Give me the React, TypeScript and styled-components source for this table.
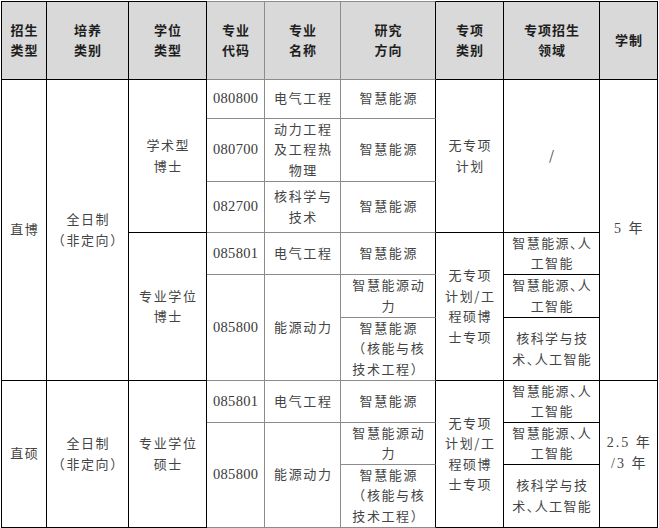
import React from 'react';
import styled, { createGlobalStyle } from 'styled-components';

const Global = createGlobalStyle`
  html, body { margin: 0; padding: 0; background: #fff; }
  body { font-family: "Noto Sans CJK SC", "Noto Sans", sans-serif; }
`;

const K = '#000';
const G = '#8c8c8c';

const Page = styled.div`
  padding: 1px 0 0 1px;
`;

const Table = styled.div`
  display: grid;
  width: max-content;
  grid-template-columns: 45px 82px 78px 58px 76px 95px 68px 96px 58px;
  grid-template-rows: 79px 39px 63px 51px 42px 43px 63px 42px 42px 63px;
  border-left: 1px solid ${K};
`;

type CellProps = {
  $c: number;
  $r: number;
  $span?: number;
  $rc?: string;
  $bc?: string;
};

const Cell = styled.div<CellProps>`
  grid-column: ${(p) => p.$c};
  grid-row: ${(p) => p.$r} / span ${(p) => p.$span ?? 1};
  box-sizing: border-box;
  border-right: 1px solid ${(p) => p.$rc ?? K};
  border-bottom: 1px solid ${(p) => p.$bc ?? K};
  display: flex;
  align-items: center;
  justify-content: center;
  text-align: center;
  white-space: nowrap;
  font-size: 13px;
  line-height: 20.5px;
  letter-spacing: 1.6px;
  padding-left: 1.6px;
  padding-bottom: 1px;
  color: #444;
`;

const HeadCell = styled(Cell)<{ $tc?: string }>`
  background: #d9d9d9;
  border-top: 1px solid ${(p) => p.$tc ?? K};
  font-weight: 700;
  color: #1e1e1e;
  letter-spacing: 1px;
  padding-left: 1px;
`;

const CodeCell = styled(Cell)`
  font-family: "Liberation Serif", "Noto Sans CJK SC", serif;
  font-size: 14.5px;
  letter-spacing: 0.3px;
  padding-left: 0.3px;
  color: #3a3a3a;
`;

const DomainCell = styled(Cell)`
  font-feature-settings: "halt";
  letter-spacing: 1.4px;
`;

const YearCell = styled(Cell)`
  font-family: "Liberation Serif", "Noto Sans CJK SC", serif;
  font-size: 14px;
  letter-spacing: 2px;
`;

const Lines = ({ t }: { t: string[] }) => (
  <div>
    {t.map((s, i) => (
      <React.Fragment key={i}>
        {i > 0 && <br />}
        {s}
      </React.Fragment>
    ))}
  </div>
);

const headers: string[][] = [
  ['招生', '类型'],
  ['培养', '类别'],
  ['学位', '类型'],
  ['专业', '代码'],
  ['专业', '名称'],
  ['研究', '方向'],
  ['专项', '类别'],
  ['专项招生', '领域'],
  ['学制'],
];

type Item = { r: number; span?: number; t: string[] };

const codes: Item[] = [
  { r: 2, t: ['080800'] },
  { r: 3, t: ['080700'] },
  { r: 4, t: ['082700'] },
  { r: 5, t: ['085801'] },
  { r: 6, span: 2, t: ['085800'] },
  { r: 8, t: ['085801'] },
  { r: 9, span: 2, t: ['085800'] },
];

const names: Item[] = [
  { r: 2, t: ['电气工程'] },
  { r: 3, t: ['动力工程', '及工程热', '物理'] },
  { r: 4, t: ['核科学与', '技术'] },
  { r: 5, t: ['电气工程'] },
  { r: 6, span: 2, t: ['能源动力'] },
  { r: 8, t: ['电气工程'] },
  { r: 9, span: 2, t: ['能源动力'] },
];

const research: Item[] = [
  { r: 2, t: ['智慧能源'] },
  { r: 3, t: ['智慧能源'] },
  { r: 4, t: ['智慧能源'] },
  { r: 5, t: ['智慧能源'] },
  { r: 6, t: ['智慧能源动', '力'] },
  { r: 7, t: ['智慧能源', '（核能与核', '技术工程）'] },
  { r: 8, t: ['智慧能源'] },
  { r: 9, t: ['智慧能源动', '力'] },
  { r: 10, t: ['智慧能源', '（核能与核', '技术工程）'] },
];

const domains: Item[] = [
  { r: 2, span: 3, t: ['/'] },
  { r: 5, t: ['智慧能源、人', '工智能'] },
  { r: 6, t: ['智慧能源、人', '工智能'] },
  { r: 7, t: ['核科学与技', '术、人工智能'] },
  { r: 8, t: ['智慧能源、人', '工智能'] },
  { r: 9, t: ['智慧能源、人', '工智能'] },
  { r: 10, t: ['核科学与技', '术、人工智能'] },
];

export default function App() {
  return (
    <Page>
      <Global />
      <Table>
        {headers.map((h, i) => {
          const c = i + 1;
          const mid = c >= 4 && c <= 6;
          return (
            <HeadCell
              key={'h' + i}
              $c={c}
              $r={1}
              $tc={mid ? G : K}
              $bc={mid ? G : K}
              $rc={c === 4 || c === 5 ? G : K}
            >
              <Lines t={h} />
            </HeadCell>
          );
        })}

        <Cell $c={1} $r={2} $span={6}><Lines t={['直博']} /></Cell>
        <Cell $c={1} $r={8} $span={3}><Lines t={['直硕']} /></Cell>

        <Cell $c={2} $r={2} $span={6}><Lines t={['全日制', '（非定向）']} /></Cell>
        <Cell $c={2} $r={8} $span={3}><Lines t={['全日制', '（非定向）']} /></Cell>

        <Cell $c={3} $r={2} $span={3}><Lines t={['学术型', '博士']} /></Cell>
        <Cell $c={3} $r={5} $span={3}><Lines t={['专业学位', '博士']} /></Cell>
        <Cell $c={3} $r={8} $span={3}><Lines t={['专业学位', '硕士']} /></Cell>

        {codes.map((it) => (
          <CodeCell key={'c' + it.r} $c={4} $r={it.r} $span={it.span} $rc={G} $bc={G}>
            <Lines t={it.t} />
          </CodeCell>
        ))}
        {names.map((it) => (
          <Cell key={'n' + it.r} $c={5} $r={it.r} $span={it.span} $rc={G} $bc={G}>
            <Lines t={it.t} />
          </Cell>
        ))}
        {research.map((it) => (
          <Cell key={'d' + it.r} $c={6} $r={it.r} $bc={G}>
            <Lines t={it.t} />
          </Cell>
        ))}

        <Cell $c={7} $r={2} $span={3}><Lines t={['无专项', '计划']} /></Cell>
        <Cell $c={7} $r={5} $span={3}><Lines t={['无专项', '计划/工', '程硕博', '士专项']} /></Cell>
        <Cell $c={7} $r={8} $span={3}><Lines t={['无专项', '计划/工', '程硕博', '士专项']} /></Cell>

        {domains.map((it) => (
          <DomainCell key={'m' + it.r} $c={8} $r={it.r} $span={it.span}>
            <Lines t={it.t} />
          </DomainCell>
        ))}

        <YearCell $c={9} $r={2} $span={6}><Lines t={['5 年']} /></YearCell>
        <YearCell $c={9} $r={8} $span={3}><Lines t={['2.5 年', '/3 年']} /></YearCell>
      </Table>
    </Page>
  );
}
